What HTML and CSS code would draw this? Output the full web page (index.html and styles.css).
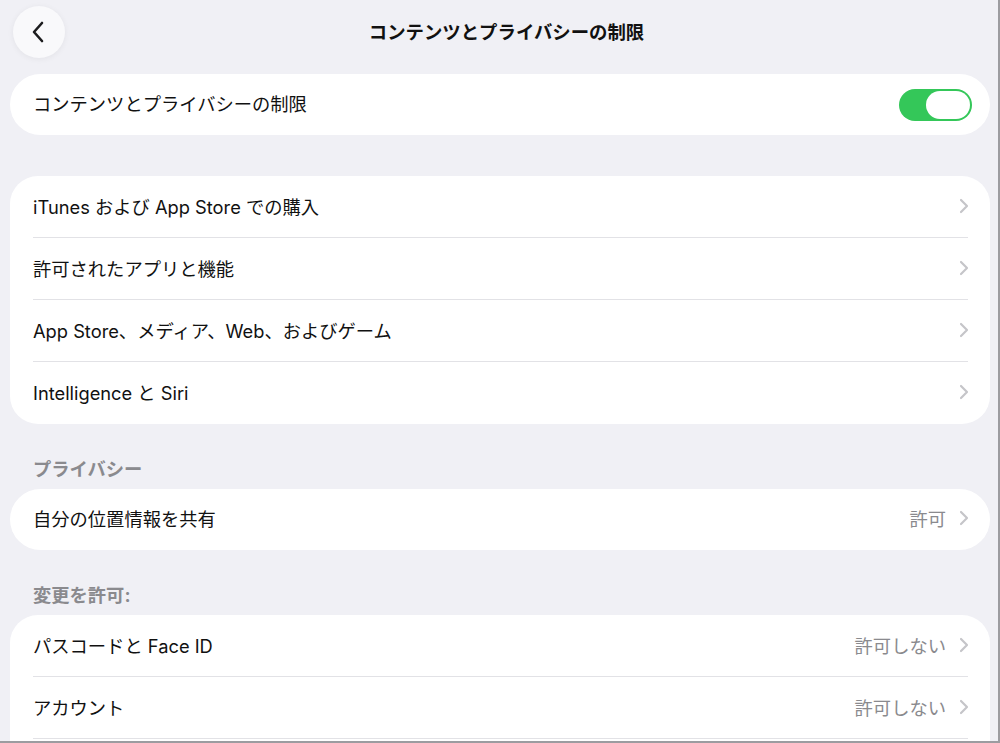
FILE: index.html
```html
<!DOCTYPE html>
<html lang="ja">
<head>
    <meta charset="UTF-8">
    <meta name="viewport" content="width=device-width, initial-scale=1.0">
    <title>コンテンツとプライバシーの制限</title>
    <link rel="stylesheet" href="styles.css">
</head>
<body>

    <div class="screen">
        <header class="nav">
            <button class="back" aria-label="戻る">
                <svg width="14" height="22" viewBox="0 0 14 22">
                    <path d="M11 2 L3 11 L11 20" fill="none" stroke="#1c1c1e" stroke-width="2.6" stroke-linecap="round" stroke-linejoin="round"/>
                </svg>
            </button>
            <h1 class="title">コンテンツとプライバシーの制限</h1>
            <div></div>
        </header>

        <main class="content">
            <div class="card pill">
                <div class="row">
                    <span class="label">コンテンツとプライバシーの制限</span>
                    <span class="toggle"><span class="knob"></span></span>
                </div>
            </div>

            <div class="card group-gap">
                <div class="row">
                    <span class="label">iTunes および App Store での購入</span>
                    <svg class="chevron" width="10" height="16" viewBox="0 0 10 16"><path d="M2 2 L8 8 L2 14"/></svg>
                </div>
                <div class="row">
                    <span class="label">許可されたアプリと機能</span>
                    <svg class="chevron" width="10" height="16" viewBox="0 0 10 16"><path d="M2 2 L8 8 L2 14"/></svg>
                </div>
                <div class="row">
                    <span class="label">App Store、メディア、Web、およびゲーム</span>
                    <svg class="chevron" width="10" height="16" viewBox="0 0 10 16"><path d="M2 2 L8 8 L2 14"/></svg>
                </div>
                <div class="row">
                    <span class="label">Intelligence と Siri</span>
                    <svg class="chevron" width="10" height="16" viewBox="0 0 10 16"><path d="M2 2 L8 8 L2 14"/></svg>
                </div>
            </div>

            <h2 class="section-title">プライバシー</h2>
            <div class="card pill">
                <div class="row">
                    <span class="label">自分の位置情報を共有</span>
                    <span class="value">許可</span>
                    <svg class="chevron" width="10" height="16" viewBox="0 0 10 16"><path d="M2 2 L8 8 L2 14"/></svg>
                </div>
            </div>

            <h2 class="section-title">変更を許可:</h2>
            <div class="card">
                <div class="row">
                    <span class="label">パスコードと Face ID</span>
                    <span class="value">許可しない</span>
                    <svg class="chevron" width="10" height="16" viewBox="0 0 10 16"><path d="M2 2 L8 8 L2 14"/></svg>
                </div>
                <div class="row">
                    <span class="label">アカウント</span>
                    <span class="value">許可しない</span>
                    <svg class="chevron" width="10" height="16" viewBox="0 0 10 16"><path d="M2 2 L8 8 L2 14"/></svg>
                </div>
                <div class="row"></div>
            </div>
        </main>
    </div>

</body>
</html>
```

FILE: styles.css
```css
body {
    margin: 0;
    padding: 0;
    background-color: #f0f0f5;
    font-family: 'Inter', 'Noto Sans CJK JP', sans-serif;
    color: #1c1c1e;
}

.screen {
    width: 998px;
    height: 741px;
    overflow: hidden;
    border-right: 2px solid #9c9ca0;
    border-bottom: 2px solid #9c9ca0;
    background-color: #f0f0f5;
}

.nav {
    display: grid;
    grid-template-columns: 1fr auto 1fr;
    align-items: center;
    height: 64px;
    padding: 0 8px 0 13px;
}

.back {
    width: 52px;
    height: 52px;
    border: none;
    border-radius: 50%;
    background-color: #f9f9fb;
    box-shadow: 0 1px 6px rgba(0, 0, 0, 0.06);
    display: flex;
    align-items: center;
    justify-content: center;
    padding: 0 2px 0 0;
    cursor: pointer;
}

.title {
    margin: 0 0 0 10px;
    font-size: 18.4px;
    font-weight: 700;
    line-height: 24px;
    color: #111;
}

.content {
    padding: 10px 8px 0 10px;
}

.card {
    background-color: #fff;
    border-radius: 28px;
    overflow: hidden;
}

.card.pill {
    border-radius: 31px;
}

.group-gap {
    margin-top: 41px;
}

.row {
    display: flex;
    align-items: center;
    height: 62px;
    margin: 0 22px 0 23px;
    padding-bottom: 2px;
    box-sizing: border-box;
    border-bottom: 1px solid #e2e2e6;
    font-size: 18.3px;
}

.row:last-child {
    border-bottom: none;
    padding-bottom: 3px;
}

.card.pill .row {
    height: 61px;
    padding-bottom: 4px;
}

.label {
    flex: 1;
    color: #111;
}

.value {
    color: #8a8a8e;
    margin-right: 13px;
}

.chevron {
    flex: none;
    margin-right: -1px;
}

.chevron path {
    fill: none;
    stroke: #c5c5c9;
    stroke-width: 2.2;
    stroke-linecap: round;
    stroke-linejoin: round;
}

.toggle {
    width: 73px;
    height: 32px;
    margin-right: -4px;
    margin-top: 4px;
    border-radius: 16px;
    background-color: #34c759;
    display: flex;
    align-items: center;
    justify-content: flex-end;
    padding: 0 2px;
    box-sizing: border-box;
}

.knob {
    width: 44px;
    height: 28px;
    border-radius: 14px;
    background-color: #fff;
}

.section-title {
    margin: 33px 0 8px 23px;
    font-size: 18.3px;
    font-weight: 700;
    line-height: 24px;
    color: #8a8a8e;
}
```
